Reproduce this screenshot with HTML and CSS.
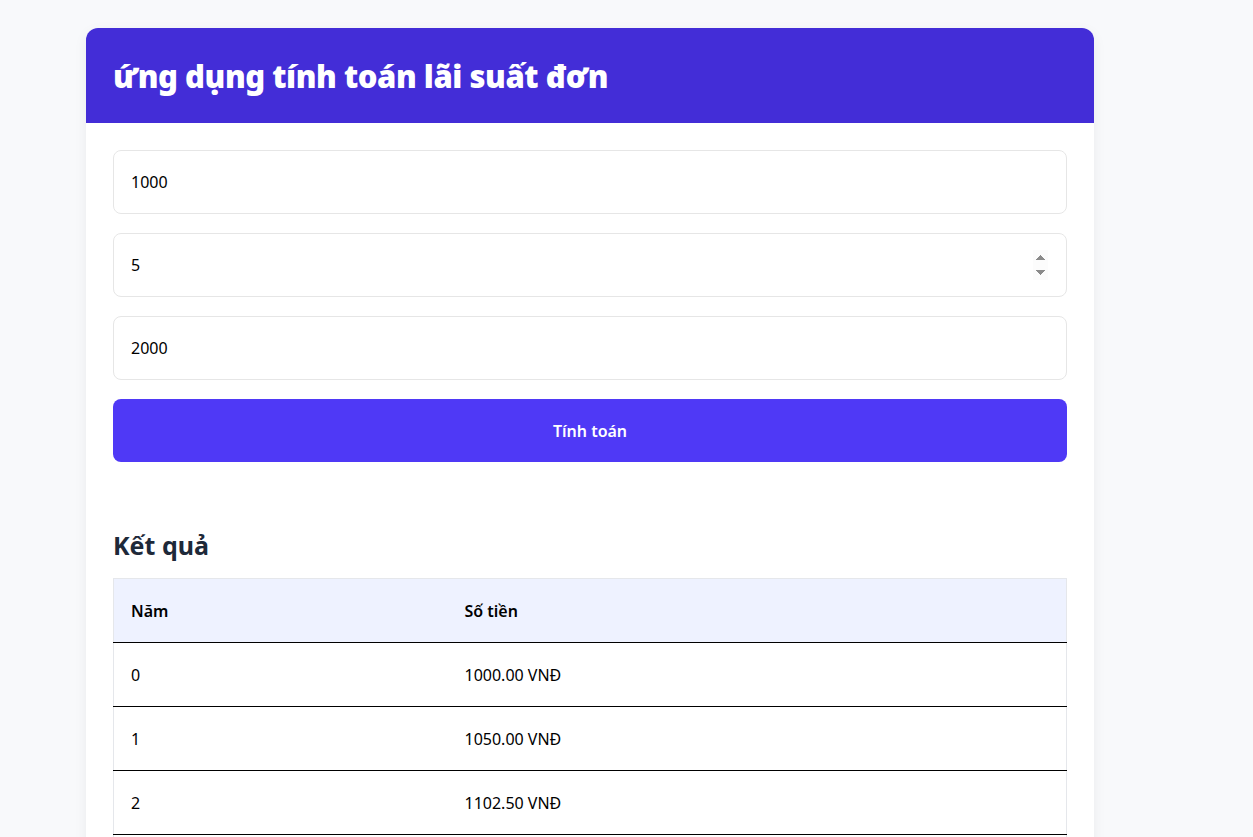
FILE: index.html
```html
<!DOCTYPE html>
<html lang="vi">
<head>
<meta charset="utf-8">
<title>Lãi suất đơn</title>
<link rel="stylesheet" href="styles.css">
</head>
<body>
<div class="page">
  <div class="card">
    <div class="card-header">
      <h1 class="title">ứng dụng tính toán lãi suất đơn</h1>
    </div>
    <div class="card-body">
      <form class="form">
        <input class="field" type="text" value="1000">
        <input class="field field-number" type="number" value="5">
        <input class="field" type="text" value="2000">
        <button class="btn" type="button">Tính toán</button>
      </form>
      <h2 class="result-title">Kết quả</h2>
      <table class="table">
        <thead>
          <tr><th class="col-year">Năm</th><th>Số tiền</th></tr>
        </thead>
        <tbody>
          <tr><td>0</td><td>1000.00 VNĐ</td></tr>
          <tr><td>1</td><td>1050.00 VNĐ</td></tr>
          <tr><td>2</td><td>1102.50 VNĐ</td></tr>
          <tr><td>3</td><td>1157.63 VNĐ</td></tr>
          <tr><td>4</td><td>1215.51 VNĐ</td></tr>
          <tr><td>5</td><td>1276.28 VNĐ</td></tr>
        </tbody>
      </table>
    </div>
  </div>
</div>
</body>
</html>
```
FILE: styles.css
```css
* { box-sizing: border-box; }
html, body { margin: 0; padding: 0; }
body {
  background: #f8f9fb;
  font-family: "Noto Sans", "Open Sans", sans-serif;
  color: #000;
}
.page {
  padding: 28px 0 40px 86px;
}
.card {
  width: 1008px;
  background: #fff;
  border-radius: 12px;
  box-shadow: 0 4px 14px rgba(0,0,0,0.06);
  overflow: hidden;
}
.card-header {
  background: #432dd7;
  height: 95px;
  padding: 0 27px;
  display: flex;
  align-items: center;
}
.title {
  margin: 0;
  color: #fff;
  font-size: 31px;
  font-weight: 900;
  letter-spacing: -0.45px;
}
.card-body {
  padding: 27px 27px 40px;
}
.form {
  display: flex;
  flex-direction: column;
  gap: 19px;
}
.field {
  display: block;
  width: 100%;
  height: 64px;
  border: 1px solid #e6e6e6;
  border-radius: 8px;
  padding: 0 17px;
  font-family: inherit;
  font-size: 16px;
  color: #000;
  background: #fff;
  outline: none;
}
.field-number { padding-right: 18px; }
.field-number::-webkit-inner-spin-button {
  opacity: 1;
  height: 30px;
}
.btn {
  height: 63px;
  border: none;
  border-radius: 8px;
  background: #4f39f6;
  color: #fff;
  font-family: inherit;
  font-size: 16px;
  font-weight: 600;
  cursor: pointer;
}
.result-title {
  margin: 67px 0 17px;
  font-size: 25px;
  line-height: 32px;
  font-weight: 700;
  color: #1e2939;
}
.table {
  width: 100%;
  border-collapse: collapse;
  border-left: 1px solid #e5e7eb;
  border-right: 1px solid #e5e7eb;
  font-size: 16px;
}
.table thead tr {
  background: #eef2ff;
}
.table th {
  text-align: left;
  font-weight: 600;
  height: 64px;
  padding: 0 17px;
  border-top: 1px solid #e5e7eb;
  border-bottom: 1px solid #000;
}
.col-year { width: 334px; }
.table td {
  height: 64px;
  padding: 0 17px;
  border-bottom: 1px solid #000;
}
```
